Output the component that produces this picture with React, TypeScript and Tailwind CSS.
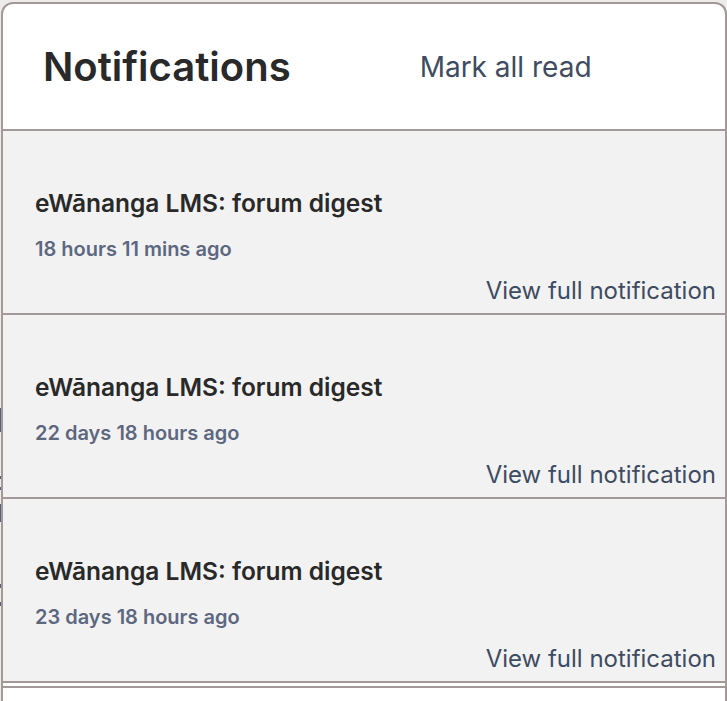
import React from 'react';

interface NotificationItem {
  title: string;
  time: string;
}

const notifications: NotificationItem[] = [
  { title: 'eWānanga LMS: forum digest', time: '18 hours 11 mins ago' },
  { title: 'eWānanga LMS: forum digest', time: '22 days 18 hours ago' },
  { title: 'eWānanga LMS: forum digest', time: '23 days 18 hours ago' },
];

const App: React.FC = () => {
  return (
    <div
      className="flex min-h-[701px] w-[727px] overflow-hidden bg-[#eeebeb] pt-[2px]"
      style={{ fontFamily: 'Inter, "Noto Sans", sans-serif' }}
    >
      {/* sliver of the page behind the panel */}
      <div className="flex w-[1px] flex-col pt-[406px]">
        <div className="h-[24px] bg-[#56627a]" />
        <div className="mt-[44px] h-[3px] bg-[#56627a]" />
        <div className="mt-[8px] h-[3px] bg-[#56627a]" />
        <div className="mt-[14px] h-[18px] bg-[#56627a]" />
        <div className="mt-[62px] h-[4px] bg-[#56627a]" />
        <div className="mt-[14px] h-[4px] bg-[#56627a]" />
      </div>

      {/* Panel */}
      <div className="flex w-[726px] flex-col rounded-t-[12px] border-2 border-b-0 border-[#a39999] bg-white">
        {/* Header */}
        <div className="flex h-[127px] items-center border-b-2 border-[#a39999] pl-[40px]">
          <h2 className="text-[40px] font-semibold leading-[48px] text-[#292929]">Notifications</h2>
          <button className="ml-[129px] text-[28px] leading-[36px] text-[#3e4b61]">Mark all read</button>
        </div>

        {/* List */}
        {notifications.map((item, index) => (
          <div
            key={index}
            className="flex h-[184px] flex-col border-b-2 border-[#a39999] bg-[#f2f2f2] pl-[32px] pr-[9px] pt-[56px]"
          >
            <div className="text-[24.5px] font-semibold leading-[32px] text-[#292929]">{item.title}</div>
            <div className="mt-[16px] text-[20px] font-semibold leading-[28px] text-[#5d6880]">{item.time}</div>
            <div className="mt-[12px] self-end text-[24px] leading-[32px] text-[#3e4b61]">
              View full notification
            </div>
          </div>
        ))}

        <div className="mt-[3px] h-[20px] border-t-2 border-[#a39999] bg-white" />
      </div>
    </div>
  );
};

export default App;
